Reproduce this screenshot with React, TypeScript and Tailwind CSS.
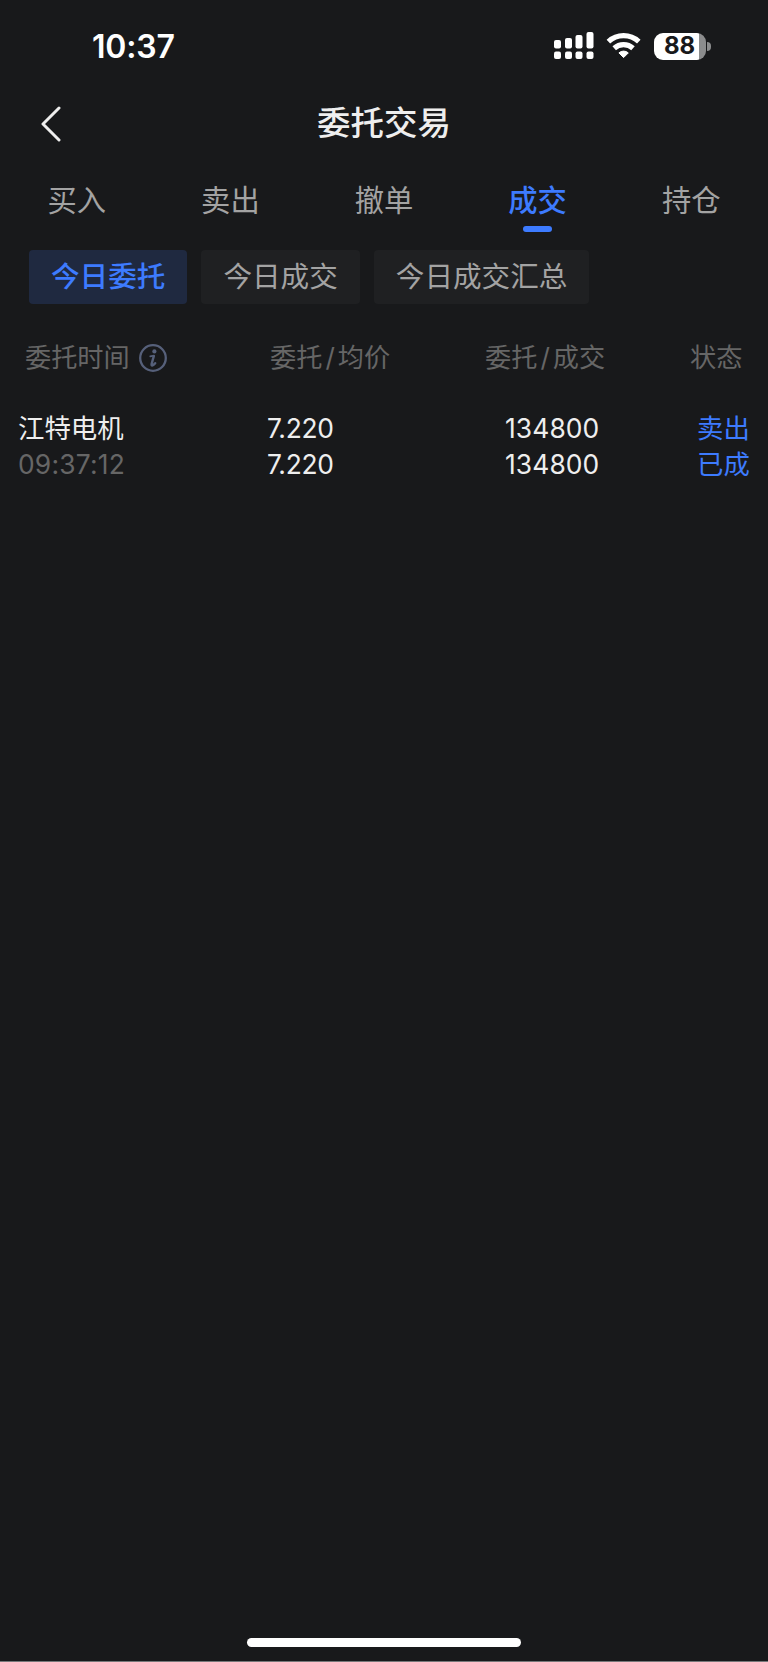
import React from 'react'

const tabs = ['买入', '卖出', '撤单', '成交', '持仓']
const filters = ['今日委托', '今日成交', '今日成交汇总']

const orders = [
  {
    name: '江特电机',
    time: '09:37:12',
    price: '7.220',
    avgPrice: '7.220',
    amount: '134800',
    filled: '134800',
    side: '卖出',
    status: '已成',
  },
]

function StatusBar() {
  return (
    <div className="flex h-[92px] items-center justify-between pl-[92px] pr-[57px]">
      <span className="pt-[2px] text-[32px] leading-none font-semibold tracking-[-0.2px] text-white">
        10:37
      </span>
      <div className="flex items-center">
        <svg width="40" height="28" viewBox="0 0 40 28" fill="#fff">
          <rect x="0" y="8" width="7" height="8.5" rx="2" />
          <rect x="11" y="6" width="7" height="10.5" rx="2" />
          <rect x="21.5" y="3" width="7" height="13.5" rx="2" />
          <rect x="32.5" y="0" width="7" height="16.5" rx="2" />
          <rect x="0" y="19.5" width="7" height="7.5" rx="2" />
          <rect x="11" y="19.5" width="7" height="7.5" rx="2" />
          <rect x="21.5" y="19.5" width="7" height="7.5" rx="2" />
          <rect x="32.5" y="19.5" width="7" height="7.5" rx="2" />
        </svg>
        <svg
          className="ml-3"
          width="36"
          height="28"
          viewBox="0 0 36 28"
          fill="none"
          stroke="#fff"
          strokeWidth="5.2"
        >
          <path d="M2.4 9.6a22.4 22.4 0 0 1 30.4 0" />
          <path d="M8.2 16.2a14 14 0 0 1 18.8 0" />
          <path
            d="M17.6 25.6l-4.7-4.7a7 7 0 0 1 9.4 0z"
            fill="#fff"
            stroke="#fff"
            strokeWidth="1"
            strokeLinejoin="round"
          />
        </svg>
        <div className="ml-3 flex h-[27px] w-[52px] items-center justify-center overflow-hidden rounded-[9px] bg-linear-to-r from-white from-[87%] to-[#8b8c8d] to-[87%] pr-[1px]">
          <span className="text-[24px] leading-none font-bold text-[#18191b]">
            88
          </span>
        </div>
        <div className="ml-[1px] h-[9px] w-[4px] rounded-r-full bg-[#8b8c8d]" />
      </div>
    </div>
  )
}

function InfoIcon() {
  return (
    <svg className="ml-[9px]" width="28" height="28" viewBox="0 0 28 28">
      <circle
        cx="14"
        cy="14"
        r="12.8"
        fill="none"
        stroke="#56607a"
        strokeWidth="2.3"
      />
      <circle cx="15.4" cy="7.4" r="2.1" fill="#56607a" />
      <path
        d="M11.2 12.4L15 11.6"
        fill="none"
        stroke="#56607a"
        strokeWidth="1.6"
        strokeLinecap="round"
      />
      <path
        d="M14.8 12.2l-2.2 7.8q-.3 1.8 1 1.4 1.3-.5 2.6-2.1"
        fill="none"
        stroke="#56607a"
        strokeWidth="2.4"
        strokeLinecap="round"
        strokeLinejoin="round"
      />
    </svg>
  )
}

export default function App() {
  return (
    <div className="flex h-[1662px] w-[768px] flex-col border-b border-[#77787a] bg-[#18191b] font-['Inter','Noto_Sans_CJK_SC',sans-serif]">
      <StatusBar />
      <div className="flex h-[64px] items-center px-[40px]">
        <svg
          width="22"
          height="36"
          viewBox="0 0 22 36"
          fill="none"
          stroke="#eeeeee"
          strokeWidth="3"
          strokeLinecap="round"
          strokeLinejoin="round"
        >
          <path d="M19 2L3 18l16 16" />
        </svg>
        <h1 className="mr-[22px] flex-1 text-center text-[33.5px] leading-none font-medium text-[#eeeeee]">
          委托交易
        </h1>
      </div>
      <div className="grid h-[94px] grid-cols-5">
        {tabs.map((tab) => (
          <div
            key={tab}
            className={
              tab === '成交'
                ? 'flex flex-col items-center pt-[30px] text-[#3d7bff]'
                : 'flex flex-col items-center pt-[30px] text-[#a3a3a3]'
            }
          >
            <span
              className={
                tab === '成交'
                  ? 'text-[29.3px] leading-[30px] font-medium'
                  : 'text-[29.3px] leading-[30px]'
              }
            >
              {tab}
            </span>
            {tab === '成交' && (
              <div className="mt-[10px] h-[6px] w-[29px] rounded-full bg-[#3d7bff]" />
            )}
          </div>
        ))}
      </div>
      <div className="flex gap-[14px] px-[29px]">
        {filters.map((filter, i) => (
          <button
            key={filter}
            className={
              i === 0
                ? 'h-[54px] rounded-[4px] bg-[#1f2940] px-[22px] text-[28.6px] leading-none font-medium text-[#3d7bff]'
                : 'h-[54px] rounded-[4px] bg-[#1f2022] px-[22px] text-[28.6px] leading-none text-[#a3a3a3]'
            }
          >
            {filter}
          </button>
        ))}
      </div>
      <div className="mt-[39px] flex h-[30px] items-center pl-[25px] text-[26.2px] leading-none text-[#666666]">
        <div className="flex w-[245px] items-center">
          委托时间
          <InfoIcon />
        </div>
        <div className="w-[215px]">
          委托<span className="mx-[3px]">/</span>均价
        </div>
        <div className="w-[205px]">
          委托<span className="mx-[3px]">/</span>成交
        </div>
        <div>状态</div>
      </div>
      {orders.map((order) => (
        <div
          key={order.time}
          className="mt-[38px] flex pl-[18px] text-[26.4px] leading-[35.6px] text-[#eeeeee]"
        >
          <div className="w-[249px]">
            <p>{order.name}</p>
            <p className="tracking-[0.2px] text-[#666666]">{order.time}</p>
          </div>
          <div className="w-[238px] tracking-[-0.3px]">
            <p>{order.price}</p>
            <p>{order.avgPrice}</p>
          </div>
          <div className="w-[192px] tracking-[0.1px]">
            <p>{order.amount}</p>
            <p>{order.filled}</p>
          </div>
          <div className="text-[#3d7bff]">
            <p>{order.side}</p>
            <p>{order.status}</p>
          </div>
        </div>
      ))}
      <div className="mx-auto mt-auto mb-[14px] h-[9px] w-[274px] rounded-full bg-white" />
    </div>
  )
}
